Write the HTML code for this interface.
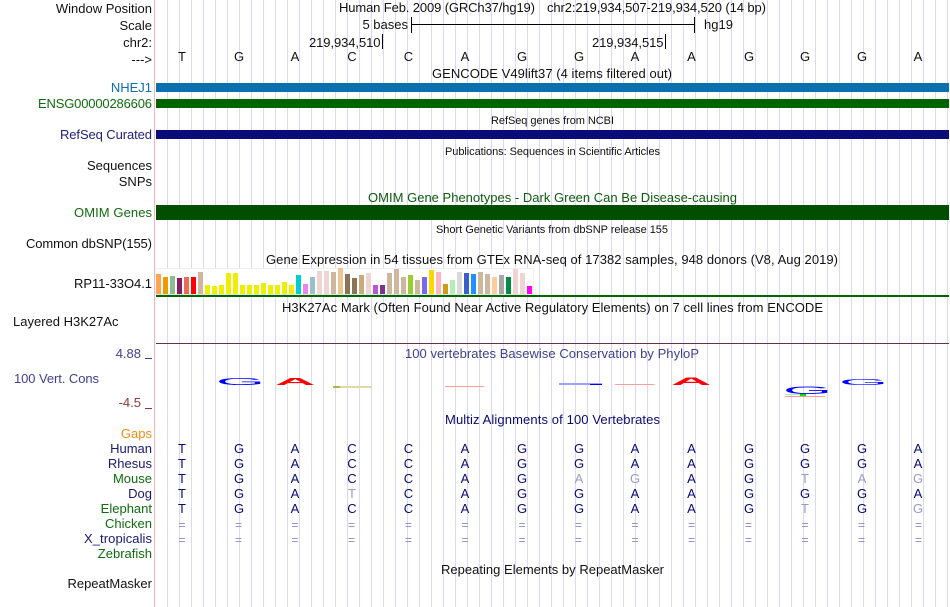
<!DOCTYPE html>
<html><head><meta charset="utf-8"><style>
html,body{margin:0;padding:0;background:#fff;width:950px;height:607px;overflow:hidden}
#grid{position:absolute;left:156px;top:0;width:794px;height:607px;background-image:linear-gradient(to right,#d9d9f6 1px,transparent 1px);background-size:12px 607px;background-position:11px 0;background-repeat:repeat-x}
svg{display:block;position:absolute;left:0;top:0}
text{font-family:"Liberation Sans",sans-serif;font-size:13px;fill:#111}
.r{text-anchor:end}
.m{text-anchor:middle}
.s{font-size:11px}
.b{fill:#0a0a70;text-anchor:middle;font-size:13px}
.g{fill:#9a9ac4;text-anchor:middle;font-size:13px}
.e{fill:#8a8ac0;text-anchor:middle;font-size:12px}
.n{fill:#191970}
.v{fill:#0f6b0f}
.lg{text-anchor:start;font-size:10px}
.bd{font-weight:bold}
</style></head><body>
<div id="grid"></div>
<svg width="950" height="607" viewBox="0 0 950 607" xmlns="http://www.w3.org/2000/svg">
<rect x="154" y="0" width="1" height="607" fill="#ffb4b4"/>

<text class="r" x="152" y="13">Window Position</text>
<text class="r" x="152" y="30">Scale</text>
<text class="r" x="152" y="47">chr2:</text>
<text class="r" x="152" y="64">---&gt;</text>
<text x="339" y="12" textLength="196">Human Feb. 2009 (GRCh37/hg19)</text>
<text x="547" y="12" textLength="219">chr2:219,934,507-219,934,520 (14 bp)</text>
<text class="r" x="408" y="29">5 bases</text>
<rect x="411" y="17" width="1" height="16" fill="#000"/>
<rect x="411" y="24" width="284" height="1" fill="#000"/>
<rect x="694" y="17" width="1" height="16" fill="#000"/>
<text x="704" y="29">hg19</text>
<text x="309" y="47" textLength="71.5">219,934,510</text>
<rect x="382" y="34" width="1" height="15" fill="#000"/>
<text x="592" y="47" textLength="71.5">219,934,515</text>
<rect x="665" y="34" width="1" height="15" fill="#000"/>

<g>
<text class="m" x="182" y="61">T</text><text class="m" x="239" y="61">G</text><text class="m" x="295" y="61">A</text><text class="m" x="352" y="61">C</text><text class="m" x="408.5" y="61">C</text><text class="m" x="465" y="61">A</text><text class="m" x="522" y="61">G</text><text class="m" x="579" y="61">G</text><text class="m" x="635" y="61">A</text><text class="m" x="691.5" y="61">A</text><text class="m" x="749" y="61">G</text><text class="m" x="805" y="61">G</text><text class="m" x="862" y="61">G</text><text class="m" x="918" y="61">A</text>
</g>

<text x="432" y="78" textLength="240">GENCODE V49lift37 (4 items filtered out)</text>
<text class="r" x="152" y="92" style="fill:#0c6fae">NHEJ1</text>
<rect x="156" y="83" width="793" height="9" fill="#0c6fae"/>
<text class="v" x="38" y="108" textLength="114">ENSG00000286606</text>
<rect x="156" y="99" width="793" height="9" fill="#006400"/>
<text class="s" x="491" y="124" textLength="123">RefSeq genes from NCBI</text>
<text x="60" y="139" textLength="92" style="fill:#20207f">RefSeq Curated</text>
<rect x="156" y="130" width="793" height="9" fill="#0a0a78"/>
<text class="s" x="445" y="155" textLength="215">Publications: Sequences in Scientific Articles</text>
<text class="r" x="152" y="170">Sequences</text>
<text class="r" x="152" y="186">SNPs</text>
<text x="368" y="202" textLength="369" style="fill:#0f5a0f">OMIM Gene Phenotypes - Dark Green Can Be Disease-causing</text>
<text class="v" x="74" y="217" textLength="78">OMIM Genes</text>
<rect x="156" y="205" width="793" height="15" fill="#004f00"/>
<text class="s" x="436" y="233" textLength="232">Short Genetic Variants from dbSNP release 155</text>
<text x="26" y="248" textLength="126">Common dbSNP(155)</text>
<text x="266" y="264" textLength="572">Gene Expression in 54 tissues from GTEx RNA-seq of 17382 samples, 948 donors (V8, Aug 2019)</text>

<rect x="156" y="268" width="378" height="27" fill="#fff"/>
<rect x="156" y="268" width="378" height="1" fill="#eeeef4"/>
<rect x="533" y="268" width="1" height="27" fill="#f0f0f4"/>
<rect x="156" y="294" width="378" height="1" fill="#d8e8d8"/>
<text x="74" y="288" textLength="78">RP11-33O4.1</text>
<g>
<rect x="156" y="274" width="5" height="20" fill="#FFA54F"/>
<rect x="163" y="277" width="5" height="17" fill="#EE9A00"/>
<rect x="170" y="276" width="5" height="18" fill="#8FBC8F"/>
<rect x="177" y="278" width="5" height="16" fill="#8B1C62"/>
<rect x="184" y="277" width="5" height="17" fill="#EE6A50"/>
<rect x="191" y="277" width="5" height="17" fill="#FF0000"/>
<rect x="198" y="272" width="5" height="22" fill="#CDB79E"/>
<rect x="205" y="285" width="5" height="9" fill="#EEEE00"/>
<rect x="212" y="286" width="5" height="8" fill="#EEEE00"/>
<rect x="219" y="285" width="5" height="9" fill="#EEEE00"/>
<rect x="226" y="273" width="5" height="21" fill="#EEEE00"/>
<rect x="233" y="273" width="5" height="21" fill="#EEEE00"/>
<rect x="240" y="285" width="5" height="9" fill="#EEEE00"/>
<rect x="247" y="285" width="5" height="9" fill="#EEEE00"/>
<rect x="254" y="285" width="5" height="9" fill="#EEEE00"/>
<rect x="261" y="283" width="5" height="11" fill="#EEEE00"/>
<rect x="268" y="285" width="5" height="9" fill="#EEEE00"/>
<rect x="275" y="285" width="5" height="9" fill="#EEEE00"/>
<rect x="282" y="282" width="5" height="12" fill="#EEEE00"/>
<rect x="289" y="285" width="5" height="9" fill="#EEEE00"/>
<rect x="296" y="275" width="5" height="19" fill="#00CED1"/>
<rect x="303" y="284" width="5" height="10" fill="#EE82EE"/>
<rect x="310" y="277" width="5" height="17" fill="#9AC0CD"/>
<rect x="317" y="271" width="5" height="23" fill="#EED5D2"/>
<rect x="324" y="271" width="5" height="23" fill="#EED5D2"/>
<rect x="331" y="272" width="5" height="22" fill="#CDB79E"/>
<rect x="338" y="268" width="5" height="26" fill="#EEC591"/>
<rect x="345" y="274" width="5" height="20" fill="#8B7355"/>
<rect x="352" y="278" width="5" height="16" fill="#8B7355"/>
<rect x="359" y="275" width="5" height="19" fill="#CDAA7D"/>
<rect x="366" y="273" width="5" height="21" fill="#EED5D2"/>
<rect x="373" y="285" width="5" height="9" fill="#BA55D3"/>
<rect x="380" y="285" width="5" height="9" fill="#7D3294"/>
<rect x="387" y="273" width="5" height="21" fill="#CDB79E"/>
<rect x="394" y="269" width="5" height="25" fill="#CDB79E"/>
<rect x="401" y="277" width="5" height="17" fill="#CDB79E"/>
<rect x="408" y="275" width="5" height="19" fill="#9ACD32"/>
<rect x="415" y="280" width="5" height="14" fill="#CDB79E"/>
<rect x="422" y="277" width="5" height="17" fill="#7A67EE"/>
<rect x="429" y="270" width="5" height="24" fill="#FFD700"/>
<rect x="436" y="272" width="5" height="22" fill="#FFB6C1"/>
<rect x="443" y="284" width="5" height="10" fill="#CD9B1D"/>
<rect x="450" y="280" width="5" height="14" fill="#B4EEB4"/>
<rect x="457" y="272" width="5" height="22" fill="#D9D9D9"/>
<rect x="464" y="273" width="5" height="21" fill="#3A5FCD"/>
<rect x="471" y="274" width="5" height="20" fill="#1E90FF"/>
<rect x="478" y="272" width="5" height="22" fill="#CDB79E"/>
<rect x="485" y="274" width="5" height="20" fill="#CDB79E"/>
<rect x="492" y="277" width="5" height="17" fill="#FFCC99"/>
<rect x="499" y="275" width="5" height="19" fill="#A6A6A6"/>
<rect x="506" y="277" width="5" height="17" fill="#008B45"/>
<rect x="513" y="269" width="5" height="25" fill="#EED5D2"/>
<rect x="520" y="273" width="5" height="21" fill="#EED5D2"/>
<rect x="527" y="286" width="5" height="8" fill="#FF00FF"/>
</g>
<rect x="156" y="295" width="793" height="2" fill="#006400"/>
<text x="282" y="312" textLength="541">H3K27Ac Mark (Often Found Near Active Regulatory Elements) on 7 cell lines from ENCODE</text>
<text x="13" y="326">Layered H3K27Ac</text>
<rect x="156" y="343" width="793" height="1" fill="#5f3350"/>

<text class="r" x="141" y="358" style="fill:#40408f">4.88</text>
<rect x="145" y="358" width="7" height="1" fill="#40408f"/>
<text x="405" y="358" textLength="294" style="fill:#40408f">100 vertebrates Basewise Conservation by PhyloP</text>
<text x="14" y="383" textLength="85" style="fill:#40408f">100 Vert. Cons</text>
<text class="r" x="141" y="407" style="fill:#8b3a3a">-4.5</text>
<rect x="145" y="408" width="7" height="1" fill="#8b3a3a"/>

<text class="lg" transform="translate(216,385) scale(6.3,1)" style="fill:#0000ff;font-size:10px">G</text>
<text class="lg bd" transform="translate(275,385) scale(5.6,1)" style="fill:#ff0000;font-size:10px">A</text>
<rect x="333" y="386" width="39" height="2" fill="#dcdca8"/><rect x="333" y="386" width="7" height="2" fill="#b5b550"/>
<rect x="445" y="386" width="39" height="1" fill="#f8a0a0"/>
<rect x="559" y="383" width="43" height="2" fill="#a0a0ff"/><rect x="590" y="384" width="12" height="1" fill="#0000ff"/>
<rect x="615" y="384" width="39" height="1" fill="#f8a0a0"/>
<text class="lg bd" transform="translate(671,385) scale(5.6,1.1)" style="fill:#ff0000;font-size:10px">A</text>
<rect x="785" y="394" width="15" height="1" fill="#b0f0b0"/>
<rect x="800" y="393" width="6" height="3" fill="#00dd00"/>
<rect x="785" y="396" width="40" height="1" fill="#f8a0a0"/>
<text class="lg" transform="translate(783,394) scale(6.3,1.1)" style="fill:#0000ff;font-size:10px">G</text>
<text class="lg" transform="translate(839,385) scale(6.3,.85)" style="fill:#0000ff;font-size:10px">G</text>

<text x="445" y="424" textLength="215" style="fill:#0a0a70">Multiz Alignments of 100 Vertebrates</text>
<text class="r" x="152" y="438" style="fill:#f08c10">Gaps</text>
<text class="r n" x="152" y="453">Human</text>
<text class="r n" x="152" y="468">Rhesus</text>
<text class="r v" x="152" y="483">Mouse</text>
<text class="r n" x="152" y="498">Dog</text>
<text class="r v" x="152" y="513">Elephant</text>
<text class="r v" x="152" y="528">Chicken</text>
<text class="n" x="84" y="543" textLength="68">X_tropicalis</text>
<text class="r v" x="152" y="558">Zebrafish</text>
<text x="441" y="574" textLength="223">Repeating Elements by RepeatMasker</text>
<text class="r" x="152" y="588">RepeatMasker</text>

<g>
<text class="b" x="182" y="453">T</text><text class="b" x="239" y="453">G</text><text class="b" x="295" y="453">A</text><text class="b" x="352" y="453">C</text><text class="b" x="408.5" y="453">C</text><text class="b" x="465" y="453">A</text><text class="b" x="522" y="453">G</text><text class="b" x="579" y="453">G</text><text class="b" x="635" y="453">A</text><text class="b" x="691.5" y="453">A</text><text class="b" x="749" y="453">G</text><text class="b" x="805" y="453">G</text><text class="b" x="862" y="453">G</text><text class="b" x="918" y="453">A</text>
<text class="b" x="182" y="468">T</text><text class="b" x="239" y="468">G</text><text class="b" x="295" y="468">A</text><text class="b" x="352" y="468">C</text><text class="b" x="408.5" y="468">C</text><text class="b" x="465" y="468">A</text><text class="b" x="522" y="468">G</text><text class="b" x="579" y="468">G</text><text class="b" x="635" y="468">A</text><text class="b" x="691.5" y="468">A</text><text class="b" x="749" y="468">G</text><text class="b" x="805" y="468">G</text><text class="b" x="862" y="468">G</text><text class="b" x="918" y="468">A</text>
<text class="b" x="182" y="483">T</text><text class="b" x="239" y="483">G</text><text class="b" x="295" y="483">A</text><text class="b" x="352" y="483">C</text><text class="b" x="408.5" y="483">C</text><text class="b" x="465" y="483">A</text><text class="b" x="522" y="483">G</text><text class="g" x="579" y="483">A</text><text class="g" x="635" y="483">G</text><text class="b" x="691.5" y="483">A</text><text class="b" x="749" y="483">G</text><text class="g" x="805" y="483">T</text><text class="g" x="862" y="483">A</text><text class="g" x="918" y="483">G</text>
<text class="b" x="182" y="498">T</text><text class="b" x="239" y="498">G</text><text class="b" x="295" y="498">A</text><text class="g" x="352" y="498">T</text><text class="b" x="408.5" y="498">C</text><text class="b" x="465" y="498">A</text><text class="b" x="522" y="498">G</text><text class="b" x="579" y="498">G</text><text class="b" x="635" y="498">A</text><text class="b" x="691.5" y="498">A</text><text class="b" x="749" y="498">G</text><text class="b" x="805" y="498">G</text><text class="b" x="862" y="498">G</text><text class="b" x="918" y="498">A</text>
<text class="b" x="182" y="513">T</text><text class="b" x="239" y="513">G</text><text class="b" x="295" y="513">A</text><text class="b" x="352" y="513">C</text><text class="b" x="408.5" y="513">C</text><text class="b" x="465" y="513">A</text><text class="b" x="522" y="513">G</text><text class="b" x="579" y="513">G</text><text class="b" x="635" y="513">A</text><text class="b" x="691.5" y="513">A</text><text class="b" x="749" y="513">G</text><text class="g" x="805" y="513">T</text><text class="b" x="862" y="513">G</text><text class="g" x="918" y="513">G</text>
<text class="e" x="182" y="529">=</text><text class="e" x="238.5" y="529">=</text><text class="e" x="295" y="529">=</text><text class="e" x="351.5" y="529">=</text><text class="e" x="408.5" y="529">=</text><text class="e" x="465" y="529">=</text><text class="e" x="522" y="529">=</text><text class="e" x="578.5" y="529">=</text><text class="e" x="635" y="529">=</text><text class="e" x="691.5" y="529">=</text><text class="e" x="748.5" y="529">=</text><text class="e" x="805" y="529">=</text><text class="e" x="861.5" y="529">=</text><text class="e" x="918.5" y="529">=</text>
<text class="e" x="182" y="544">=</text><text class="e" x="238.5" y="544">=</text><text class="e" x="295" y="544">=</text><text class="e" x="351.5" y="544">=</text><text class="e" x="408.5" y="544">=</text><text class="e" x="465" y="544">=</text><text class="e" x="522" y="544">=</text><text class="e" x="578.5" y="544">=</text><text class="e" x="635" y="544">=</text><text class="e" x="691.5" y="544">=</text><text class="e" x="748.5" y="544">=</text><text class="e" x="805" y="544">=</text><text class="e" x="861.5" y="544">=</text><text class="e" x="918.5" y="544">=</text>
</g>
</svg>
</body></html>
